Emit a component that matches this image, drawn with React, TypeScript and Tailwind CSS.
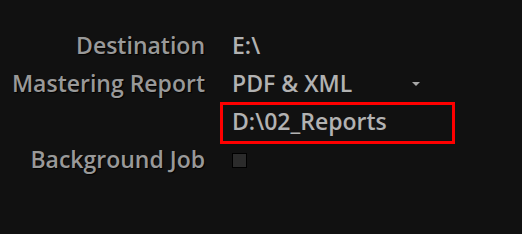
const labelCls =
  "text-right text-[23px] font-semibold leading-[38px] text-[#999999] [text-shadow:1px_1px_1px_#000] whitespace-nowrap";
const valueCls = "text-[23px] font-semibold leading-[38px] text-[#b2b2b2] whitespace-nowrap";

const App = () => {
  return (
    <div
      className="w-[522px] h-[234px] bg-[#111111] overflow-hidden"
      style={{ fontFamily: '"Open Sans", "Noto Sans", sans-serif' }}
    >
      <div className="grid grid-cols-[205px_196px] gap-x-[27px] pt-[26px]">
        <div className={labelCls}>Destination</div>
        <div className={valueCls}>E:\</div>

        <div className={labelCls}>Mastering Report</div>
        <div className={`${valueCls} flex items-center justify-between`}>
          <span>PDF &amp; XML</span>
          <svg width="8" height="4" viewBox="0 0 8 4" className="mr-[8px] mt-[2px]">
            <polygon points="0,0 8,0 4,4" fill="#a8a8a8" />
          </svg>
        </div>

        <div />
        <div className="relative">
          <div className={valueCls}>D:\02_Reports</div>
          <div className="absolute left-[-12px] top-0 w-[235px] h-[42px] border-[3px] border-[#ff0000]" />
        </div>

        <div className={labelCls}>Background Job</div>
        <div className="h-[38px] flex items-center">
          <div className="w-[15px] h-[15px] mt-[2px] border border-black bg-[#2b2b2b]" />
        </div>
      </div>
    </div>
  );
};

export default App;
